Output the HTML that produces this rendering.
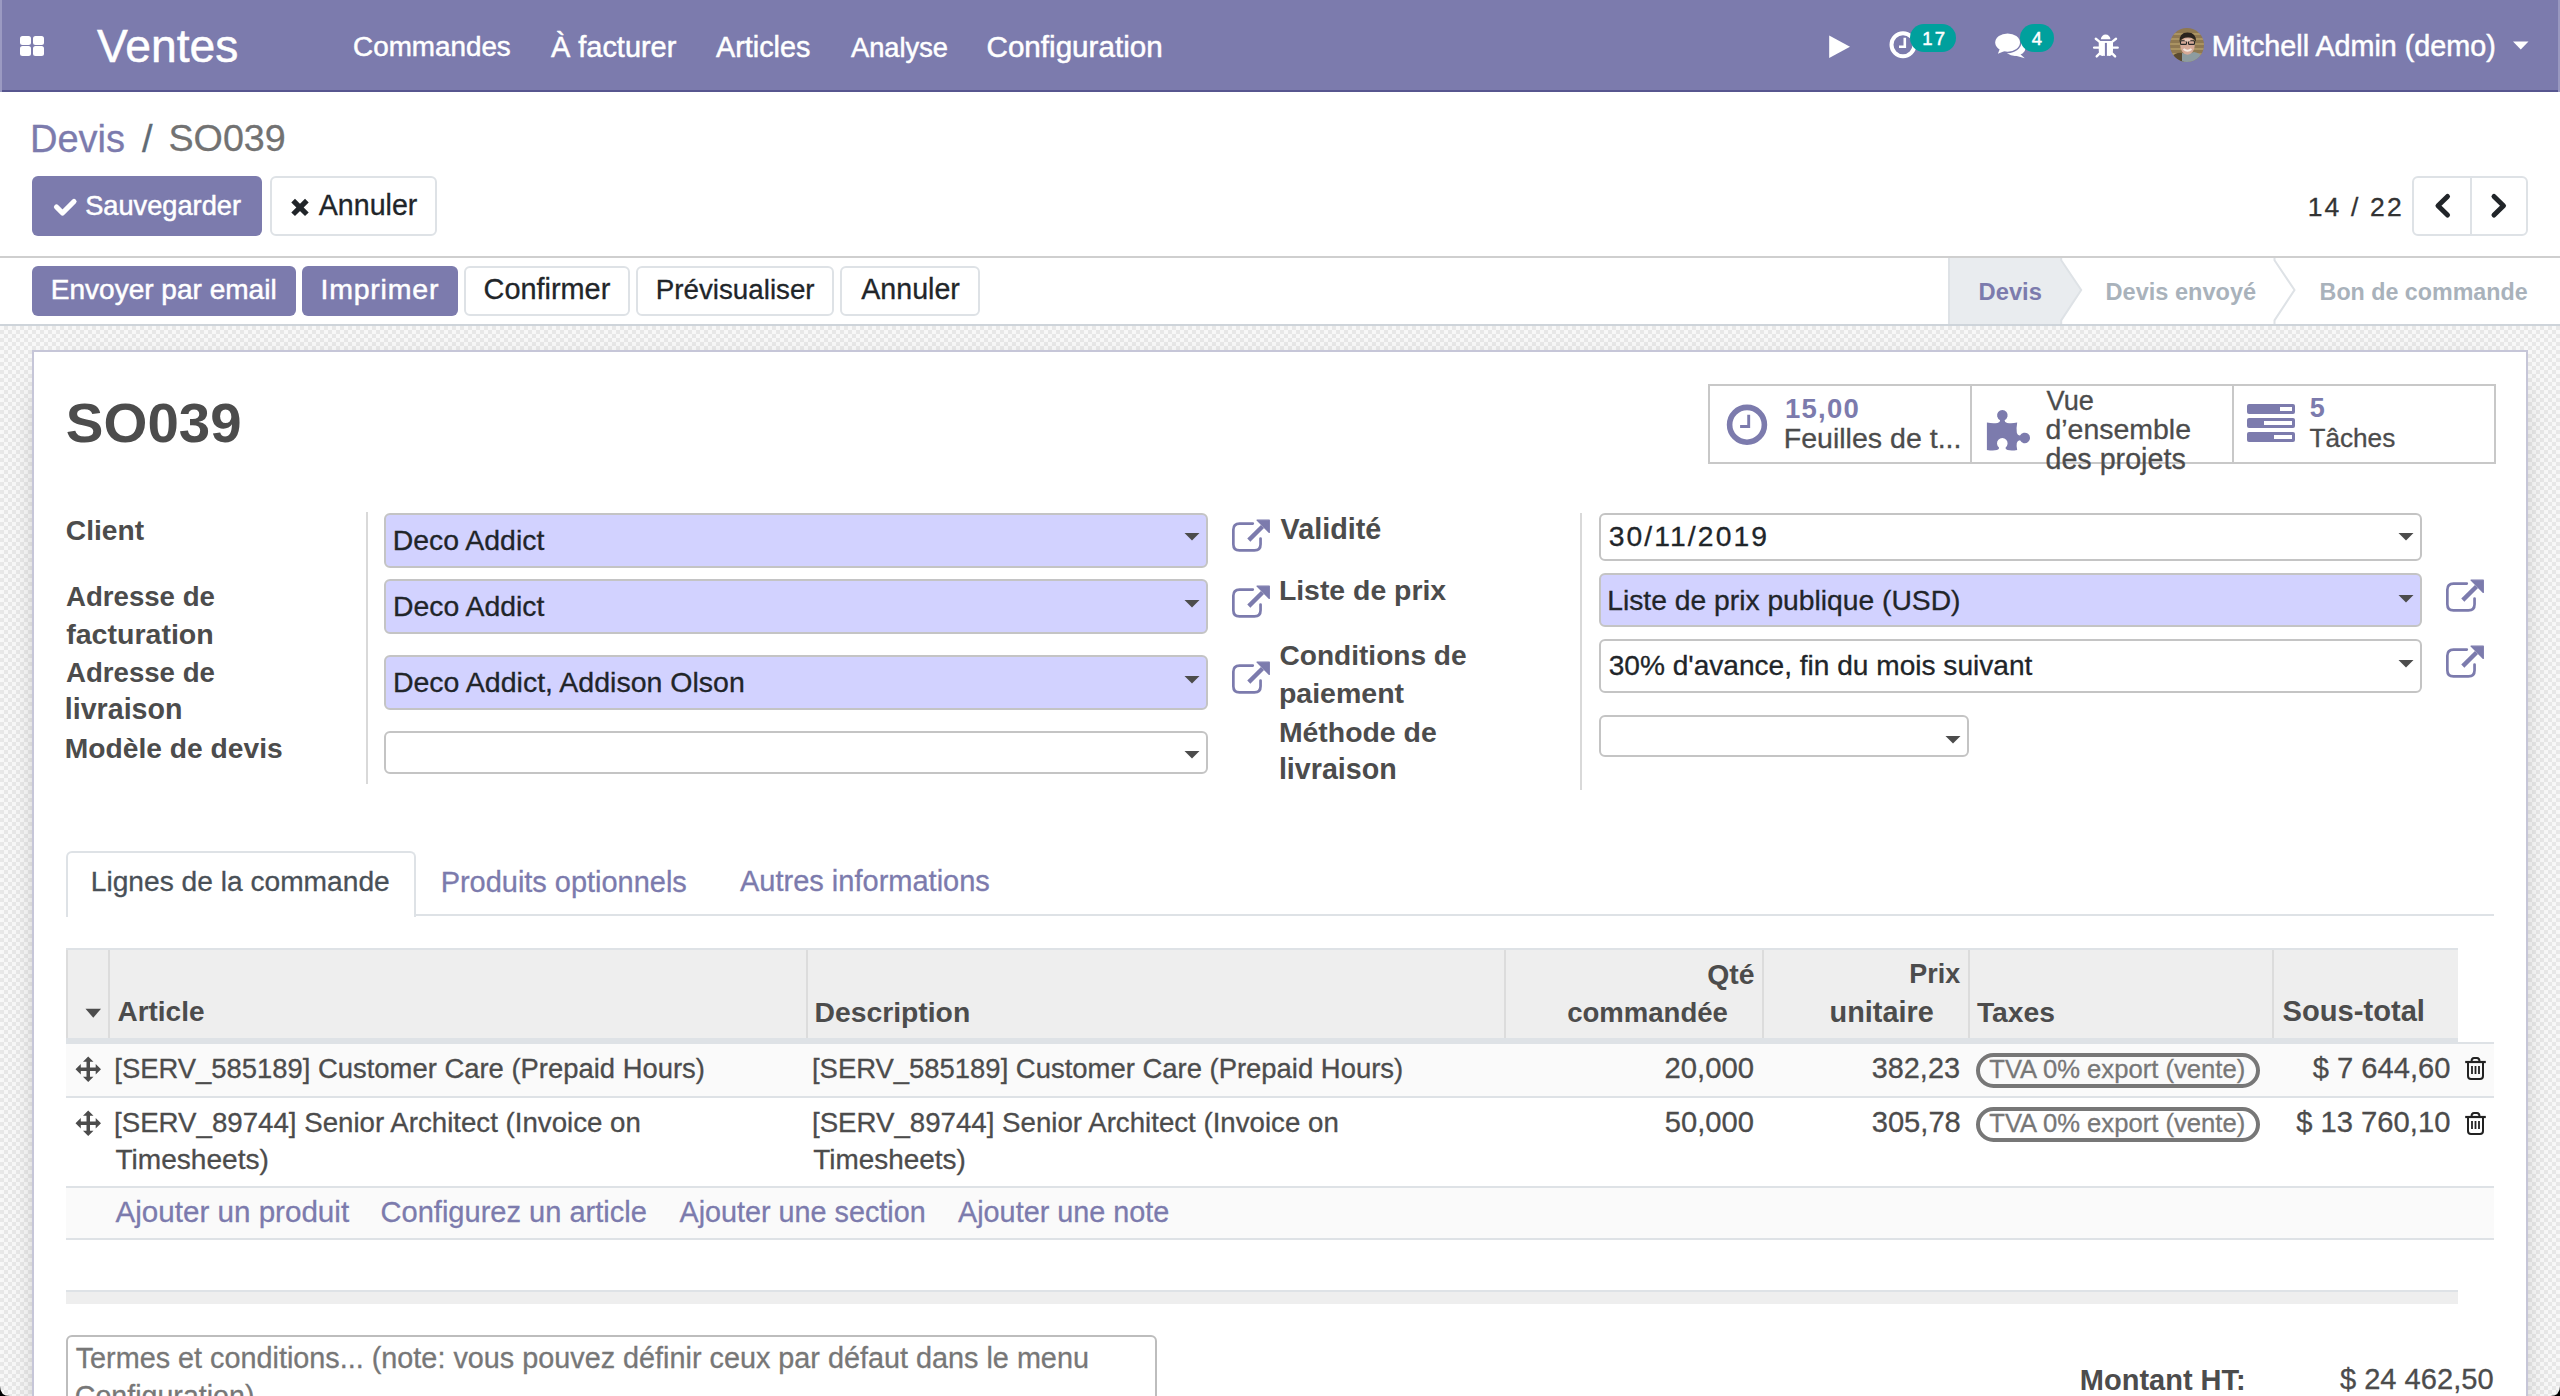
<!DOCTYPE html>
<html><head><meta charset="utf-8"><title>SO039 - Odoo</title>
<style>
html,body{margin:0;padding:0;}
body{width:2560px;height:1396px;overflow:hidden;position:relative;background:#fff;font-family:"Liberation Sans",sans-serif;}
.t{position:absolute;white-space:nowrap;}
</style></head><body>
<div style="position:absolute;left:0px;top:326px;width:2560px;height:1070px;z-index:0;background-color:#f8f8f8;background-image:linear-gradient(45deg,#e8e8e8 25%,transparent 25%,transparent 75%,#e8e8e8 75%),linear-gradient(45deg,#e8e8e8 25%,transparent 25%,transparent 75%,#e8e8e8 75%);background-size:8px 8px;background-position:0 0,4px 4px;"></div>
<div style="position:absolute;left:0px;top:0px;width:2560px;height:90px;z-index:1;background:#7C7BAD;"></div>
<div style="position:absolute;left:0px;top:90px;width:2560px;height:2px;z-index:1;background:#57568f;"></div>
<div style="position:absolute;left:0px;top:0px;width:2px;height:92px;z-index:2;background:#9b9ac2;"></div>
<div style="position:absolute;left:2558px;top:0px;width:2px;height:92px;z-index:2;background:#9897bf;"></div>
<div style="position:absolute;left:20px;top:35.5px;width:11px;height:9.6px;z-index:3;background:#fff;border-radius:2.5px;"></div>
<div style="position:absolute;left:33px;top:35.5px;width:11px;height:9.6px;z-index:3;background:#fff;border-radius:2.5px;"></div>
<div style="position:absolute;left:20px;top:46.3px;width:11px;height:9.6px;z-index:3;background:#fff;border-radius:2.5px;"></div>
<div style="position:absolute;left:33px;top:46.3px;width:11px;height:9.6px;z-index:3;background:#fff;border-radius:2.5px;"></div>
<div class="t" style="left:97.00px;top:23.36px;font-size:46.23px;line-height:46.23px;font-weight:400;color:#ffffff;z-index:5;-webkit-text-stroke:0.5px #fff;">Ventes</div>
<div class="t" style="left:353.11px;top:33.45px;font-size:27.82px;line-height:27.82px;font-weight:400;color:#ffffff;z-index:5;-webkit-text-stroke:0.5px #fff;">Commandes</div>
<div class="t" style="left:551.00px;top:32.52px;font-size:28.92px;line-height:28.92px;font-weight:400;color:#ffffff;z-index:5;-webkit-text-stroke:0.5px #fff;">À facturer</div>
<div class="t" style="left:716.00px;top:32.63px;font-size:28.78px;line-height:28.78px;font-weight:400;color:#ffffff;z-index:5;-webkit-text-stroke:0.5px #fff;">Articles</div>
<div class="t" style="left:851.00px;top:33.92px;font-size:27.26px;line-height:27.26px;font-weight:400;color:#ffffff;z-index:5;-webkit-text-stroke:0.5px #fff;">Analyse</div>
<div class="t" style="left:986.52px;top:31.93px;font-size:29.61px;line-height:29.61px;font-weight:400;color:#ffffff;z-index:5;-webkit-text-stroke:0.5px #fff;">Configuration</div>
<svg style="position:absolute;left:1826px;top:32px;z-index:6" width="28" height="30" viewBox="0 0 28 30"><path d="M3.2 3.5 L3.2 26 L24 14.7 Z" fill="#fff"/></svg>
<svg style="position:absolute;left:1886px;top:28px;z-index:6" width="34" height="34" viewBox="0 0 34 34"><circle cx="17" cy="16.75" r="11.5" fill="none" stroke="#fff" stroke-width="4"/><path d="M18.8 9.8 V18.7 H13" fill="none" stroke="#fff" stroke-width="2.6"/></svg>
<div style="position:absolute;left:1910px;top:24px;width:46px;height:28px;z-index:7;background:#00A09D;border-radius:14px;"></div>
<div class="t" style="left:1922.30px;top:30.14px;font-size:18.50px;line-height:18.50px;font-weight:400;color:#ffffff;z-index:8;letter-spacing:2.171px;-webkit-text-stroke:0.5px #fff;">17</div>
<svg style="position:absolute;left:1990px;top:28px;z-index:6" width="40" height="34" viewBox="0 0 40 34"><ellipse cx="25" cy="19.6" rx="10.6" ry="8.4" fill="#fff"/><path d="M29 25 L34.8 30.2 L25 27.6 Z" fill="#fff"/><ellipse cx="17.6" cy="14.6" rx="13.8" ry="10.6" fill="#7C7BAD"/><ellipse cx="17.6" cy="14.6" rx="12.4" ry="9.2" fill="#fff"/><path d="M10 20.5 L7.9 25.8 L16 22.6 Z" fill="#fff"/></svg>
<div style="position:absolute;left:2020px;top:24px;width:34px;height:28px;z-index:7;background:#00A09D;border-radius:14px;"></div>
<div class="t" style="left:2031.63px;top:30.14px;font-size:18.50px;line-height:18.50px;font-weight:400;color:#ffffff;z-index:8;-webkit-text-stroke:0.5px #fff;">4</div>
<svg style="position:absolute;left:2090px;top:30px;z-index:6" width="32" height="32" viewBox="0 0 32 32"><path d="M10.9 9.3 A4.75 4.75 0 0 1 20.4 9.3 Z" fill="#fff"/><path d="M8.75 10.9 H23 V20.5 Q23 25.5 19.5 26 Q17.5 25.5 15.9 26.2 Q14.3 25.5 12.3 26 Q8.75 25.5 8.75 20.5 Z" fill="#fff"/><rect x="14.9" y="12.9" width="2" height="14" fill="#7C7BAD"/><path d="M5.8 8.8 L9.4 11.6 M26 8.8 L22.4 11.6 M4.1 17.6 H9 M27.7 17.6 H22.8 M6.7 26.4 L10 23.2 M25.1 26.4 L21.8 23.2" stroke="#fff" stroke-width="2.4" stroke-linecap="round"/></svg>
<svg style="position:absolute;left:2170px;top:28px;z-index:6" width="34" height="34" viewBox="0 0 34 34"><defs><clipPath id="av"><circle cx="17" cy="17" r="17"/></clipPath></defs>
<g clip-path="url(#av)"><rect width="34" height="34" fill="#8f7850"/>
<path d="M0 6 H34 M0 11 H34 M0 16 H34 M0 21 H34 M0 26 H34" stroke="#b49c68" stroke-width="1.6"/>
<path d="M0 30 Q6 24 12 25 L14 34 H0 Z" fill="#5a4a30"/>
<path d="M12 25 Q18 27 24 24 Q30 25 34 30 V34 H12 Z" fill="#8d9ca0"/>
<ellipse cx="17.5" cy="17.5" rx="7.2" ry="9.2" fill="#d6aa98"/>
<path d="M9.5 14 Q9 4.5 17.5 4.5 Q26.5 4.5 26 14 Q24 9 17.5 9.5 Q12 9.5 9.5 14 Z" fill="#2a231d"/>
<rect x="10.5" y="12.8" width="6" height="3.6" rx="1" fill="none" stroke="#2a2a2a" stroke-width="1.1"/>
<rect x="18.5" y="12.8" width="6" height="3.6" rx="1" fill="none" stroke="#2a2a2a" stroke-width="1.1"/>
<path d="M13.5 21 Q17.5 24.5 21.5 21" stroke="#f4e8e0" stroke-width="1.8" fill="none"/>
<ellipse cx="17.5" cy="12" rx="3" ry="1.5" fill="#e8c8b8"/></g></svg>
<div class="t" style="left:2211.70px;top:31.68px;font-size:28.73px;line-height:28.73px;font-weight:400;color:#ffffff;z-index:5;-webkit-text-stroke:0.5px #fff;">Mitchell Admin (demo)</div>
<svg style="position:absolute;left:2511px;top:39px;z-index:6" width="20" height="12" viewBox="0 0 20 12"><path d="M2 2.5 H17.5 L9.75 10.5 Z" fill="#fff"/></svg>
<div class="t" style="left:29.95px;top:119.53px;font-size:38.07px;line-height:38.07px;font-weight:400;color:#7C7BAD;z-index:5;-webkit-text-stroke:0.3px #7C7BAD;">Devis</div>
<div class="t" style="left:142.00px;top:119.58px;font-size:38.00px;line-height:38.00px;font-weight:400;color:#5f6b75;z-index:5;letter-spacing:1.360px;-webkit-text-stroke:0.3px #5f6b75;">/</div>
<div class="t" style="left:168.49px;top:119.87px;font-size:37.66px;line-height:37.66px;font-weight:400;color:#727272;z-index:5;-webkit-text-stroke:0.3px #727272;">SO039</div>
<div style="position:absolute;left:32px;top:176px;width:230px;height:60px;z-index:2;background:#7C7BAD;border-radius:6px;"></div>
<svg style="position:absolute;left:50px;top:194px;z-index:6" width="30" height="26" viewBox="0 0 30 26"><path d="M6.5 13 L12.5 19 L24 7.5" fill="none" stroke="#fff" stroke-width="5.2" stroke-linecap="round" stroke-linejoin="round"/></svg>
<div class="t" style="left:85.16px;top:192.45px;font-size:27.23px;line-height:27.23px;font-weight:400;color:#ffffff;z-index:5;-webkit-text-stroke:0.5px #fff;">Sauvegarder</div>
<div style="position:absolute;left:270px;top:176px;width:167px;height:60px;z-index:2;background:#fff;border:2px solid #dee2e6;border-radius:6px;box-sizing:border-box;"></div>
<svg style="position:absolute;left:288px;top:197px;z-index:6" width="24" height="22" viewBox="0 0 24 22"><path d="M5.14 3.54 L18.86 17.26 M18.86 3.54 L5.14 17.26" stroke="#212529" stroke-width="5.2"/></svg>
<div class="t" style="left:318.75px;top:191.28px;font-size:28.61px;line-height:28.61px;font-weight:400;color:#212529;z-index:5;-webkit-text-stroke:0.3px #212529;">Annuler</div>
<div class="t" style="left:2307.64px;top:193.57px;font-size:26.50px;line-height:26.50px;font-weight:400;color:#333333;z-index:5;letter-spacing:2.173px;-webkit-text-stroke:0.3px #333333;">14 / 22</div>
<div style="position:absolute;left:2412px;top:176px;width:116px;height:60px;z-index:2;background:#fff;border:2px solid #dee2e6;border-radius:6px;box-sizing:border-box;"></div>
<div style="position:absolute;left:2470px;top:178px;width:2px;height:56px;z-index:3;background:#dee2e6;"></div>
<svg style="position:absolute;left:2430px;top:190px;z-index:6" width="26" height="32" viewBox="0 0 26 32"><path d="M17.5 6.5 L8 15.75 L17.5 25" fill="none" stroke="#212529" stroke-width="5" stroke-linecap="round" stroke-linejoin="round"/></svg>
<svg style="position:absolute;left:2486px;top:190px;z-index:6" width="26" height="32" viewBox="0 0 26 32"><path d="M8 6.5 L17.5 15.75 L8 25" fill="none" stroke="#212529" stroke-width="5" stroke-linecap="round" stroke-linejoin="round"/></svg>
<div style="position:absolute;left:0px;top:256px;width:2560px;height:2px;z-index:2;background:#cfcfcf;"></div>
<div style="position:absolute;left:0px;top:324px;width:2560px;height:2px;z-index:2;background:#ced4da;"></div>
<div style="position:absolute;left:32px;top:266px;width:264px;height:50px;z-index:2;background:#7C7BAD;border-radius:6px;"></div>
<div class="t" style="left:50.76px;top:275.76px;font-size:28.04px;line-height:28.04px;font-weight:400;color:#ffffff;z-index:5;-webkit-text-stroke:0.5px #fff;">Envoyer par email</div>
<div style="position:absolute;left:302px;top:266px;width:156px;height:50px;z-index:2;background:#7C7BAD;border-radius:6px;"></div>
<div class="t" style="left:320.44px;top:275.37px;font-size:28.50px;line-height:28.50px;font-weight:400;color:#ffffff;z-index:5;letter-spacing:0.789px;-webkit-text-stroke:0.5px #fff;">Imprimer</div>
<div style="position:absolute;left:464px;top:266px;width:166px;height:50px;z-index:2;background:#fff;border:2px solid #dee2e6;border-radius:6px;box-sizing:border-box;"></div>
<div class="t" style="left:483.56px;top:275.04px;font-size:28.89px;line-height:28.89px;font-weight:400;color:#212529;z-index:5;-webkit-text-stroke:0.3px #212529;">Confirmer</div>
<div style="position:absolute;left:636px;top:266px;width:198px;height:50px;z-index:2;background:#fff;border:2px solid #dee2e6;border-radius:6px;box-sizing:border-box;"></div>
<div class="t" style="left:655.78px;top:276.01px;font-size:27.75px;line-height:27.75px;font-weight:400;color:#212529;z-index:5;-webkit-text-stroke:0.3px #212529;">Prévisualiser</div>
<div style="position:absolute;left:840px;top:266px;width:140px;height:50px;z-index:2;background:#fff;border:2px solid #dee2e6;border-radius:6px;box-sizing:border-box;"></div>
<div class="t" style="left:861.25px;top:275.28px;font-size:28.61px;line-height:28.61px;font-weight:400;color:#212529;z-index:5;-webkit-text-stroke:0.3px #212529;">Annuler</div>
<svg style="position:absolute;left:1947px;top:258px;z-index:3" width="613" height="66" viewBox="0 0 613 66"><path d="M2 -1 H114.2 V2.3 L134.2 32 L114.2 62.4 V67 H2 Z" fill="#e9ecef" stroke="#dee2e6" stroke-width="2"/>
<path d="M327.5 -1 V2.3 L347.5 32 L327.5 62.4 V67" fill="none" stroke="#dee2e6" stroke-width="2"/></svg>
<div class="t" style="left:1978.58px;top:280.93px;font-size:23.71px;line-height:23.71px;font-weight:700;color:#7C7BAD;z-index:5;">Devis</div>
<div class="t" style="left:2105.59px;top:281.07px;font-size:23.55px;line-height:23.55px;font-weight:700;color:#a9b2bb;z-index:5;">Devis envoyé</div>
<div class="t" style="left:2319.60px;top:281.32px;font-size:23.25px;line-height:23.25px;font-weight:700;color:#a9b2bb;z-index:5;">Bon de commande</div>
<div style="position:absolute;left:32px;top:350px;width:2496px;height:1100px;z-index:1;background:#fff;border:2px solid #c6c6d8;box-sizing:border-box;box-shadow:0 10px 40px -30px #000;"></div>
<div class="t" style="left:65.87px;top:395.24px;font-size:56.43px;line-height:56.43px;font-weight:700;color:#4c4c4c;z-index:5;">SO039</div>
<div style="position:absolute;left:1708px;top:384px;width:788px;height:80px;z-index:2;border:2px solid #c8c8c8;box-sizing:border-box;background:#fff;"></div>
<div style="position:absolute;left:1970px;top:386px;width:2px;height:76px;z-index:3;background:#c8c8c8;"></div>
<div style="position:absolute;left:2232px;top:386px;width:2px;height:76px;z-index:3;background:#c8c8c8;"></div>
<svg style="position:absolute;left:1722px;top:400px;z-index:6" width="50" height="50" viewBox="0 0 50 50"><circle cx="25" cy="24.8" r="17.4" fill="none" stroke="#7C7BAD" stroke-width="5.6"/><path d="M26.7 14.8 V26.5 H18.1" fill="none" stroke="#7C7BAD" stroke-width="2.9"/></svg>
<div class="t" style="left:1785.05px;top:394.72px;font-size:27.50px;line-height:27.50px;font-weight:700;color:#7C7BAD;z-index:5;letter-spacing:1.232px;">15,00</div>
<div class="t" style="left:1783.72px;top:423.52px;font-size:28.56px;line-height:28.56px;font-weight:400;color:#4c4c4c;z-index:5;-webkit-text-stroke:0.3px #4c4c4c;">Feuilles de t...</div>
<svg style="position:absolute;left:1984px;top:406px;z-index:6" width="50" height="48" viewBox="0 0 50 48"><path d="M2.9 16.6 Q9 17.6 13.5 16.9 Q16.2 16.4 16.1 14.2 A5.3 5.3 0 1 1 20.6 14.2 Q20.5 16.4 23.2 16.9 Q27.5 17.6 33.2 16.6 Q32.2 22 32.8 26.5 Q33.5 29.5 36 29.6 A5.3 5.3 0 1 1 36 34.3 Q33.5 34.4 32.8 37 Q32.2 40 33.2 43.9 Q27.5 45 23.5 44 Q21 43.2 21.6 41.5 A5.3 5.3 0 1 0 15 41.5 Q15.6 43.2 13 44 Q9 45 2.9 43.9 Z" fill="#7C7BAD"/></svg>
<div class="t" style="left:2046.60px;top:386.78px;font-size:27.20px;line-height:27.20px;font-weight:400;color:#4c4c4c;z-index:5;-webkit-text-stroke:0.3px #4c4c4c;">Vue</div>
<div class="t" style="left:2045.46px;top:415.41px;font-size:28.46px;line-height:28.46px;font-weight:400;color:#4c4c4c;z-index:5;-webkit-text-stroke:0.3px #4c4c4c;">d’ensemble</div>
<div class="t" style="left:2045.45px;top:444.70px;font-size:28.70px;line-height:28.70px;font-weight:400;color:#4c4c4c;z-index:5;-webkit-text-stroke:0.3px #4c4c4c;">des projets</div>
<svg style="position:absolute;left:2245px;top:402px;z-index:6" width="54" height="44" viewBox="0 0 54 44"><rect x="2" y="2" width="48" height="10" rx="2" fill="#7C7BAD"/><rect x="35" y="5" width="12" height="4" fill="#fff"/>
<rect x="2" y="16" width="48" height="10" rx="2" fill="#7C7BAD"/><rect x="19" y="19" width="28" height="4" fill="#fff"/>
<rect x="2" y="30" width="48" height="10" rx="2" fill="#7C7BAD"/><rect x="29" y="33" width="18" height="4" fill="#fff"/></svg>
<div class="t" style="left:2309.69px;top:395.14px;font-size:27.00px;line-height:27.00px;font-weight:700;color:#7C7BAD;z-index:5;">5</div>
<div class="t" style="left:2309.48px;top:425.25px;font-size:26.17px;line-height:26.17px;font-weight:400;color:#4c4c4c;z-index:5;-webkit-text-stroke:0.3px #4c4c4c;">Tâches</div>
<div class="t" style="left:65.87px;top:516.67px;font-size:28.16px;line-height:28.16px;font-weight:700;color:#4c4c4c;z-index:5;">Client</div>
<div class="t" style="left:65.95px;top:583.21px;font-size:27.63px;line-height:27.63px;font-weight:700;color:#4c4c4c;z-index:5;">Adresse de</div>
<div class="t" style="left:66.21px;top:619.83px;font-size:28.55px;line-height:28.55px;font-weight:700;color:#4c4c4c;z-index:5;">facturation</div>
<div class="t" style="left:65.95px;top:658.81px;font-size:27.63px;line-height:27.63px;font-weight:700;color:#4c4c4c;z-index:5;">Adresse de</div>
<div class="t" style="left:64.78px;top:695.46px;font-size:28.63px;line-height:28.63px;font-weight:700;color:#4c4c4c;z-index:5;">livraison</div>
<div class="t" style="left:64.81px;top:734.42px;font-size:28.21px;line-height:28.21px;font-weight:700;color:#4c4c4c;z-index:5;">Modèle de devis</div>
<div style="position:absolute;left:366px;top:512px;width:2px;height:272px;z-index:2;background:#d9d9d9;"></div>
<div style="position:absolute;left:384px;top:512.5px;width:824px;height:55.0px;z-index:2;background:#d2d2ff;border:2px solid #c4c4c4;border-radius:6px;box-sizing:border-box;"></div>
<svg style="position:absolute;left:1182px;top:531px;z-index:3" width="20" height="12" viewBox="0 0 20 12"><path d="M2.5 2 H17.5 L10 9.5 Z" fill="#4c4c4c"/></svg>
<div class="t" style="left:392.73px;top:525.95px;font-size:28.42px;line-height:28.42px;font-weight:400;color:#212529;z-index:5;-webkit-text-stroke:0.3px #212529;">Deco Addict</div>
<div style="position:absolute;left:384px;top:578.5px;width:824px;height:55.0px;z-index:2;background:#d2d2ff;border:2px solid #c4c4c4;border-radius:6px;box-sizing:border-box;"></div>
<svg style="position:absolute;left:1182px;top:598px;z-index:3" width="20" height="12" viewBox="0 0 20 12"><path d="M2.5 2 H17.5 L10 9.5 Z" fill="#4c4c4c"/></svg>
<div class="t" style="left:392.93px;top:592.48px;font-size:28.38px;line-height:28.38px;font-weight:400;color:#212529;z-index:5;-webkit-text-stroke:0.3px #212529;">Deco Addict</div>
<div style="position:absolute;left:384px;top:654.5px;width:824px;height:55.0px;z-index:2;background:#d2d2ff;border:2px solid #c4c4c4;border-radius:6px;box-sizing:border-box;"></div>
<svg style="position:absolute;left:1182px;top:673.7px;z-index:3" width="20" height="12" viewBox="0 0 20 12"><path d="M2.5 2 H17.5 L10 9.5 Z" fill="#4c4c4c"/></svg>
<div class="t" style="left:392.92px;top:668.05px;font-size:28.53px;line-height:28.53px;font-weight:400;color:#212529;z-index:5;-webkit-text-stroke:0.3px #212529;">Deco Addict, Addison Olson</div>
<div style="position:absolute;left:384px;top:730.5px;width:824px;height:43.0px;z-index:2;background:#fff;border:2px solid #c4c4c4;border-radius:6px;box-sizing:border-box;"></div>
<svg style="position:absolute;left:1182px;top:749px;z-index:3" width="20" height="12" viewBox="0 0 20 12"><path d="M2.5 2 H17.5 L10 9.5 Z" fill="#4c4c4c"/></svg>
<svg style="position:absolute;left:1232px;top:519px;z-index:3" width="38" height="33" viewBox="0 0 38 33"><path d="M20.8 4.55 H7.5 Q1.35 4.55 1.35 10.7 V25.2 Q1.35 31.4 7.5 31.4 H22.4 Q28.55 31.4 28.55 25.2 V19.5" fill="none" stroke="#7C7BAD" stroke-width="2.7" stroke-linecap="round"/><path d="M16.8 21.1 L30.5 7.5" stroke="#7C7BAD" stroke-width="4.4"/><path d="M25 1.2 H37.3 V13.5 Z" fill="#7C7BAD" stroke="#7C7BAD" stroke-width="1.2" stroke-linejoin="round"/></svg>
<svg style="position:absolute;left:1232px;top:585px;z-index:3" width="38" height="33" viewBox="0 0 38 33"><path d="M20.8 4.55 H7.5 Q1.35 4.55 1.35 10.7 V25.2 Q1.35 31.4 7.5 31.4 H22.4 Q28.55 31.4 28.55 25.2 V19.5" fill="none" stroke="#7C7BAD" stroke-width="2.7" stroke-linecap="round"/><path d="M16.8 21.1 L30.5 7.5" stroke="#7C7BAD" stroke-width="4.4"/><path d="M25 1.2 H37.3 V13.5 Z" fill="#7C7BAD" stroke="#7C7BAD" stroke-width="1.2" stroke-linejoin="round"/></svg>
<svg style="position:absolute;left:1232px;top:661px;z-index:3" width="38" height="33" viewBox="0 0 38 33"><path d="M20.8 4.55 H7.5 Q1.35 4.55 1.35 10.7 V25.2 Q1.35 31.4 7.5 31.4 H22.4 Q28.55 31.4 28.55 25.2 V19.5" fill="none" stroke="#7C7BAD" stroke-width="2.7" stroke-linecap="round"/><path d="M16.8 21.1 L30.5 7.5" stroke="#7C7BAD" stroke-width="4.4"/><path d="M25 1.2 H37.3 V13.5 Z" fill="#7C7BAD" stroke="#7C7BAD" stroke-width="1.2" stroke-linejoin="round"/></svg>
<div class="t" style="left:1280.60px;top:515.44px;font-size:28.77px;line-height:28.77px;font-weight:700;color:#4c4c4c;z-index:5;">Validité</div>
<div class="t" style="left:1278.90px;top:575.96px;font-size:28.40px;line-height:28.40px;font-weight:700;color:#4c4c4c;z-index:5;">Liste de prix</div>
<div class="t" style="left:1279.48px;top:642.22px;font-size:28.09px;line-height:28.09px;font-weight:700;color:#4c4c4c;z-index:5;">Conditions de</div>
<div class="t" style="left:1278.89px;top:678.86px;font-size:28.52px;line-height:28.52px;font-weight:700;color:#4c4c4c;z-index:5;">paiement</div>
<div class="t" style="left:1278.90px;top:717.95px;font-size:28.41px;line-height:28.41px;font-weight:700;color:#4c4c4c;z-index:5;">Méthode de</div>
<div class="t" style="left:1278.88px;top:755.34px;font-size:28.66px;line-height:28.66px;font-weight:700;color:#4c4c4c;z-index:5;">livraison</div>
<div style="position:absolute;left:1580px;top:512.5px;width:2px;height:277px;z-index:2;background:#d9d9d9;"></div>
<div style="position:absolute;left:1599px;top:512.7px;width:823px;height:48.39999999999998px;z-index:2;background:#fff;border:2px solid #c4c4c4;border-radius:6px;box-sizing:border-box;"></div>
<svg style="position:absolute;left:2396px;top:531.3px;z-index:3" width="20" height="12" viewBox="0 0 20 12"><path d="M2.5 2 H17.5 L10 9.5 Z" fill="#4c4c4c"/></svg>
<div class="t" style="left:1608.65px;top:522.34px;font-size:28.30px;line-height:28.30px;font-weight:400;color:#212529;z-index:5;letter-spacing:2.102px;-webkit-text-stroke:0.3px #212529;">30/11/2019</div>
<div style="position:absolute;left:1599px;top:572.7px;width:823px;height:54.59999999999991px;z-index:2;background:#d2d2ff;border:2px solid #c4c4c4;border-radius:6px;box-sizing:border-box;"></div>
<svg style="position:absolute;left:2396px;top:592.5px;z-index:3" width="20" height="12" viewBox="0 0 20 12"><path d="M2.5 2 H17.5 L10 9.5 Z" fill="#4c4c4c"/></svg>
<div class="t" style="left:1607.24px;top:586.49px;font-size:28.25px;line-height:28.25px;font-weight:400;color:#212529;z-index:5;-webkit-text-stroke:0.3px #212529;">Liste de prix publique (USD)</div>
<div style="position:absolute;left:1599px;top:638.7px;width:823px;height:54.69999999999993px;z-index:2;background:#fff;border:2px solid #c4c4c4;border-radius:6px;box-sizing:border-box;"></div>
<svg style="position:absolute;left:2396px;top:658px;z-index:3" width="20" height="12" viewBox="0 0 20 12"><path d="M2.5 2 H17.5 L10 9.5 Z" fill="#4c4c4c"/></svg>
<div class="t" style="left:1608.66px;top:652.03px;font-size:28.08px;line-height:28.08px;font-weight:400;color:#212529;z-index:5;-webkit-text-stroke:0.3px #212529;">30% d'avance, fin du mois suivant</div>
<div style="position:absolute;left:1599px;top:714.8px;width:370px;height:41.90000000000009px;z-index:2;background:#fff;border:2px solid #c4c4c4;border-radius:6px;box-sizing:border-box;"></div>
<svg style="position:absolute;left:1943px;top:733.5px;z-index:3" width="20" height="12" viewBox="0 0 20 12"><path d="M2.5 2 H17.5 L10 9.5 Z" fill="#4c4c4c"/></svg>
<svg style="position:absolute;left:2446px;top:579px;z-index:3" width="38" height="33" viewBox="0 0 38 33"><path d="M20.8 4.55 H7.5 Q1.35 4.55 1.35 10.7 V25.2 Q1.35 31.4 7.5 31.4 H22.4 Q28.55 31.4 28.55 25.2 V19.5" fill="none" stroke="#7C7BAD" stroke-width="2.7" stroke-linecap="round"/><path d="M16.8 21.1 L30.5 7.5" stroke="#7C7BAD" stroke-width="4.4"/><path d="M25 1.2 H37.3 V13.5 Z" fill="#7C7BAD" stroke="#7C7BAD" stroke-width="1.2" stroke-linejoin="round"/></svg>
<svg style="position:absolute;left:2446px;top:645.4px;z-index:3" width="38" height="33" viewBox="0 0 38 33"><path d="M20.8 4.55 H7.5 Q1.35 4.55 1.35 10.7 V25.2 Q1.35 31.4 7.5 31.4 H22.4 Q28.55 31.4 28.55 25.2 V19.5" fill="none" stroke="#7C7BAD" stroke-width="2.7" stroke-linecap="round"/><path d="M16.8 21.1 L30.5 7.5" stroke="#7C7BAD" stroke-width="4.4"/><path d="M25 1.2 H37.3 V13.5 Z" fill="#7C7BAD" stroke="#7C7BAD" stroke-width="1.2" stroke-linejoin="round"/></svg>
<div style="position:absolute;left:66px;top:914px;width:2428px;height:2px;z-index:2;background:#dee2e6;"></div>
<div style="position:absolute;left:66px;top:850.5px;width:350px;height:66px;z-index:3;background:#fff;border:2px solid #dee2e6;border-bottom:none;border-radius:6px 6px 0 0;box-sizing:border-box;"></div>
<div class="t" style="left:90.75px;top:868.16px;font-size:28.16px;line-height:28.16px;font-weight:400;color:#495057;z-index:5;-webkit-text-stroke:0.3px #495057;">Lignes de la commande</div>
<div class="t" style="left:440.68px;top:867.50px;font-size:28.94px;line-height:28.94px;font-weight:400;color:#7C7BAD;z-index:5;-webkit-text-stroke:0.3px #7C7BAD;">Produits optionnels</div>
<div class="t" style="left:740.00px;top:867.45px;font-size:29.00px;line-height:29.00px;font-weight:400;color:#7C7BAD;z-index:5;-webkit-text-stroke:0.3px #7C7BAD;">Autres informations</div>
<div style="position:absolute;left:66px;top:948px;width:2392px;height:2px;z-index:2;background:#dee2e6;"></div>
<div style="position:absolute;left:66px;top:950px;width:2392px;height:88px;z-index:2;background:#eeeeee;"></div>
<div style="position:absolute;left:66px;top:1038px;width:2392px;height:6px;z-index:2;background:#dee2e6;"></div>
<div style="position:absolute;left:66px;top:1042px;width:2428px;height:2px;z-index:2;background:#dee2e6;"></div>
<div style="position:absolute;left:66px;top:950px;width:2px;height:88px;z-index:3;background:#dcdcdc;"></div>
<div style="position:absolute;left:108px;top:950px;width:2px;height:88px;z-index:3;background:#dcdcdc;"></div>
<div style="position:absolute;left:806px;top:950px;width:2px;height:88px;z-index:3;background:#dcdcdc;"></div>
<div style="position:absolute;left:1504px;top:950px;width:2px;height:88px;z-index:3;background:#dcdcdc;"></div>
<div style="position:absolute;left:1762px;top:950px;width:2px;height:88px;z-index:3;background:#dcdcdc;"></div>
<div style="position:absolute;left:1968px;top:950px;width:2px;height:88px;z-index:3;background:#dcdcdc;"></div>
<div style="position:absolute;left:2272px;top:950px;width:2px;height:88px;z-index:3;background:#dcdcdc;"></div>
<svg style="position:absolute;left:82px;top:1004px;z-index:4" width="24" height="18" viewBox="0 0 24 18"><path d="M3.5 4.7 H19 L11.25 13.7 Z" fill="#4c4c4c"/></svg>
<div class="t" style="left:117.44px;top:998.33px;font-size:27.97px;line-height:27.97px;font-weight:700;color:#4c4c4c;z-index:5;">Article</div>
<div class="t" style="left:814.50px;top:998.04px;font-size:28.31px;line-height:28.31px;font-weight:700;color:#4c4c4c;z-index:5;">Description</div>
<div class="t" style="left:1707.17px;top:959.99px;font-size:28.36px;line-height:28.36px;font-weight:700;color:#4c4c4c;z-index:5;">Qté</div>
<div class="t" style="left:1567.17px;top:998.67px;font-size:27.56px;line-height:27.56px;font-weight:700;color:#4c4c4c;z-index:5;">commandée</div>
<div class="t" style="left:1909.28px;top:961.21px;font-size:26.92px;line-height:26.92px;font-weight:700;color:#4c4c4c;z-index:5;">Prix</div>
<div class="t" style="left:1829.57px;top:997.58px;font-size:28.85px;line-height:28.85px;font-weight:700;color:#4c4c4c;z-index:5;">unitaire</div>
<div class="t" style="left:1976.92px;top:998.06px;font-size:28.29px;line-height:28.29px;font-weight:700;color:#4c4c4c;z-index:5;">Taxes</div>
<div class="t" style="left:2282.62px;top:997.35px;font-size:29.12px;line-height:29.12px;font-weight:700;color:#4c4c4c;z-index:5;">Sous-total</div>
<div style="position:absolute;left:66px;top:1044px;width:2428px;height:52px;z-index:2;background:#fafafa;"></div>
<div style="position:absolute;left:66px;top:1096px;width:2428px;height:2px;z-index:2;background:#dee2e6;"></div>
<div style="position:absolute;left:66px;top:1186px;width:2428px;height:2px;z-index:2;background:#dee2e6;"></div>
<div style="position:absolute;left:66px;top:1188px;width:2428px;height:50px;z-index:2;background:#fafafa;"></div>
<div style="position:absolute;left:66px;top:1238px;width:2428px;height:2px;z-index:2;background:#dee2e6;"></div>
<div class="t" style="left:114.33px;top:1055.40px;font-size:27.41px;line-height:27.41px;font-weight:400;color:#4c4c4c;z-index:5;-webkit-text-stroke:0.3px #4c4c4c;">[SERV_585189] Customer Care (Prepaid Hours)</div>
<div class="t" style="left:811.98px;top:1055.36px;font-size:27.45px;line-height:27.45px;font-weight:400;color:#4c4c4c;z-index:5;-webkit-text-stroke:0.3px #4c4c4c;">[SERV_585189] Customer Care (Prepaid Hours)</div>
<div class="t" style="left:1664.54px;top:1053.82px;font-size:29.27px;line-height:29.27px;font-weight:400;color:#4c4c4c;z-index:5;-webkit-text-stroke:0.3px #4c4c4c;">20,000</div>
<div class="t" style="left:1871.73px;top:1054.16px;font-size:28.87px;line-height:28.87px;font-weight:400;color:#4c4c4c;z-index:5;-webkit-text-stroke:0.3px #4c4c4c;">382,23</div>
<div class="t" style="left:2312.71px;top:1053.93px;font-size:29.14px;line-height:29.14px;font-weight:400;color:#4c4c4c;z-index:5;-webkit-text-stroke:0.3px #4c4c4c;">$ 7 644,60</div>
<svg style="position:absolute;left:74.7px;top:1055.5px;z-index:4" width="27" height="27" viewBox="0 0 27 27"><path d="M13.2 0.5 L18.5 5.8 H15 V11.5 H20.7 V8 L26 13.2 L20.7 18.5 V15 H15 V20.7 H18.5 L13.2 26 L8 20.7 H11.5 V15 H5.8 V18.5 L0.5 13.2 L5.8 8 V11.5 H11.5 V5.8 H8 Z" fill="#4c4c4c"/></svg>
<svg style="position:absolute;left:2465px;top:1057px;z-index:4" width="21" height="23" viewBox="0 0 21 23"><path d="M0.2 5 H20.8" stroke="#222" stroke-width="2.2"/><path d="M6.5 4.5 Q6.5 1 9 1 H12 Q14.5 1 14.5 4.5" fill="none" stroke="#222" stroke-width="2"/><path d="M3 4.5 V19 Q3 22 6 22 H15 Q18 22 18 19 V4.5" fill="none" stroke="#222" stroke-width="2"/><path d="M7 9 V17 M10.5 9 V17 M14 9 V17" stroke="#222" stroke-width="1.8"/></svg>
<div style="position:absolute;left:1976px;top:1052.6px;width:284px;height:35px;z-index:4;border:4px solid #777;border-radius:18px;box-sizing:border-box;"></div>
<div class="t" style="left:1989.29px;top:1056.79px;font-size:25.64px;line-height:25.64px;font-weight:400;color:#777777;z-index:5;-webkit-text-stroke:0.3px #777777;">TVA 0% export (vente)</div>
<div class="t" style="left:114.06px;top:1108.88px;font-size:27.66px;line-height:27.66px;font-weight:400;color:#4c4c4c;z-index:5;-webkit-text-stroke:0.3px #4c4c4c;">[SERV_89744] Senior Architect (Invoice on</div>
<div class="t" style="left:115.44px;top:1145.81px;font-size:28.10px;line-height:28.10px;font-weight:400;color:#4c4c4c;z-index:5;-webkit-text-stroke:0.3px #4c4c4c;">Timesheets)</div>
<div class="t" style="left:811.96px;top:1108.89px;font-size:27.66px;line-height:27.66px;font-weight:400;color:#4c4c4c;z-index:5;-webkit-text-stroke:0.3px #4c4c4c;">[SERV_89744] Senior Architect (Invoice on</div>
<div class="t" style="left:813.34px;top:1145.97px;font-size:27.92px;line-height:27.92px;font-weight:400;color:#4c4c4c;z-index:5;-webkit-text-stroke:0.3px #4c4c4c;">Timesheets)</div>
<div class="t" style="left:1664.83px;top:1107.61px;font-size:29.17px;line-height:29.17px;font-weight:400;color:#4c4c4c;z-index:5;-webkit-text-stroke:0.3px #4c4c4c;">50,000</div>
<div class="t" style="left:1871.73px;top:1107.63px;font-size:29.14px;line-height:29.14px;font-weight:400;color:#4c4c4c;z-index:5;-webkit-text-stroke:0.3px #4c4c4c;">305,78</div>
<div class="t" style="left:2296.21px;top:1107.58px;font-size:29.20px;line-height:29.20px;font-weight:400;color:#4c4c4c;z-index:5;-webkit-text-stroke:0.3px #4c4c4c;">$ 13 760,10</div>
<svg style="position:absolute;left:74.7px;top:1110px;z-index:4" width="27" height="27" viewBox="0 0 27 27"><path d="M13.2 0.5 L18.5 5.8 H15 V11.5 H20.7 V8 L26 13.2 L20.7 18.5 V15 H15 V20.7 H18.5 L13.2 26 L8 20.7 H11.5 V15 H5.8 V18.5 L0.5 13.2 L5.8 8 V11.5 H11.5 V5.8 H8 Z" fill="#4c4c4c"/></svg>
<svg style="position:absolute;left:2465px;top:1111.5px;z-index:4" width="21" height="23" viewBox="0 0 21 23"><path d="M0.2 5 H20.8" stroke="#222" stroke-width="2.2"/><path d="M6.5 4.5 Q6.5 1 9 1 H12 Q14.5 1 14.5 4.5" fill="none" stroke="#222" stroke-width="2"/><path d="M3 4.5 V19 Q3 22 6 22 H15 Q18 22 18 19 V4.5" fill="none" stroke="#222" stroke-width="2"/><path d="M7 9 V17 M10.5 9 V17 M14 9 V17" stroke="#222" stroke-width="1.8"/></svg>
<div style="position:absolute;left:1976px;top:1106.5px;width:284px;height:35px;z-index:4;border:4px solid #777;border-radius:18px;box-sizing:border-box;"></div>
<div class="t" style="left:1989.29px;top:1110.59px;font-size:25.64px;line-height:25.64px;font-weight:400;color:#777777;z-index:5;-webkit-text-stroke:0.3px #777777;">TVA 0% export (vente)</div>
<div class="t" style="left:115.50px;top:1197.44px;font-size:29.60px;line-height:29.60px;font-weight:400;color:#7C7BAD;z-index:5;-webkit-text-stroke:0.3px #7C7BAD;">Ajouter un produit</div>
<div class="t" style="left:380.55px;top:1197.90px;font-size:29.06px;line-height:29.06px;font-weight:400;color:#7C7BAD;z-index:5;-webkit-text-stroke:0.3px #7C7BAD;">Configurez un article</div>
<div class="t" style="left:679.50px;top:1198.16px;font-size:28.75px;line-height:28.75px;font-weight:400;color:#7C7BAD;z-index:5;-webkit-text-stroke:0.3px #7C7BAD;">Ajouter une section</div>
<div class="t" style="left:958.00px;top:1198.12px;font-size:28.80px;line-height:28.80px;font-weight:400;color:#7C7BAD;z-index:5;-webkit-text-stroke:0.3px #7C7BAD;">Ajouter une note</div>
<div style="position:absolute;left:66px;top:1290px;width:2392px;height:2px;z-index:2;background:#dee2e6;"></div>
<div style="position:absolute;left:66px;top:1292px;width:2392px;height:12px;z-index:2;background:#eeeeee;"></div>
<div style="position:absolute;left:66px;top:1334.5px;width:1091px;height:120px;z-index:2;border:2px solid #bdbdbd;border-radius:6px;box-sizing:border-box;background:#fff;"></div>
<div class="t" style="left:75.67px;top:1343.61px;font-size:28.81px;line-height:28.81px;font-weight:400;color:#777777;z-index:5;-webkit-text-stroke:0.3px #777777;">Termes et conditions... (note: vous pouvez définir ceux par défaut dans le menu</div>
<div class="t" style="left:74.82px;top:1381.79px;font-size:28.60px;line-height:28.60px;font-weight:400;color:#777777;z-index:5;-webkit-text-stroke:0.3px #777777;">Configuration)</div>
<div class="t" style="left:2079.86px;top:1366.46px;font-size:28.99px;line-height:28.99px;font-weight:700;color:#4c4c4c;z-index:5;">Montant HT:</div>
<div class="t" style="left:2339.91px;top:1365.36px;font-size:29.10px;line-height:29.10px;font-weight:400;color:#4c4c4c;z-index:5;-webkit-text-stroke:0.3px #4c4c4c;">$ 24 462,50</div>
<svg style="position:absolute;left:0px;top:1380px;z-index:20" width="16" height="16" viewBox="0 0 16 16"><path d="M0 6 Q0 16 10 16 H0 Z" fill="#000"/></svg>
<svg style="position:absolute;left:2544px;top:1380px;z-index:20" width="16" height="16" viewBox="0 0 16 16"><path d="M16 6 Q16 16 6 16 H16 Z" fill="#000"/></svg>
</body></html>
